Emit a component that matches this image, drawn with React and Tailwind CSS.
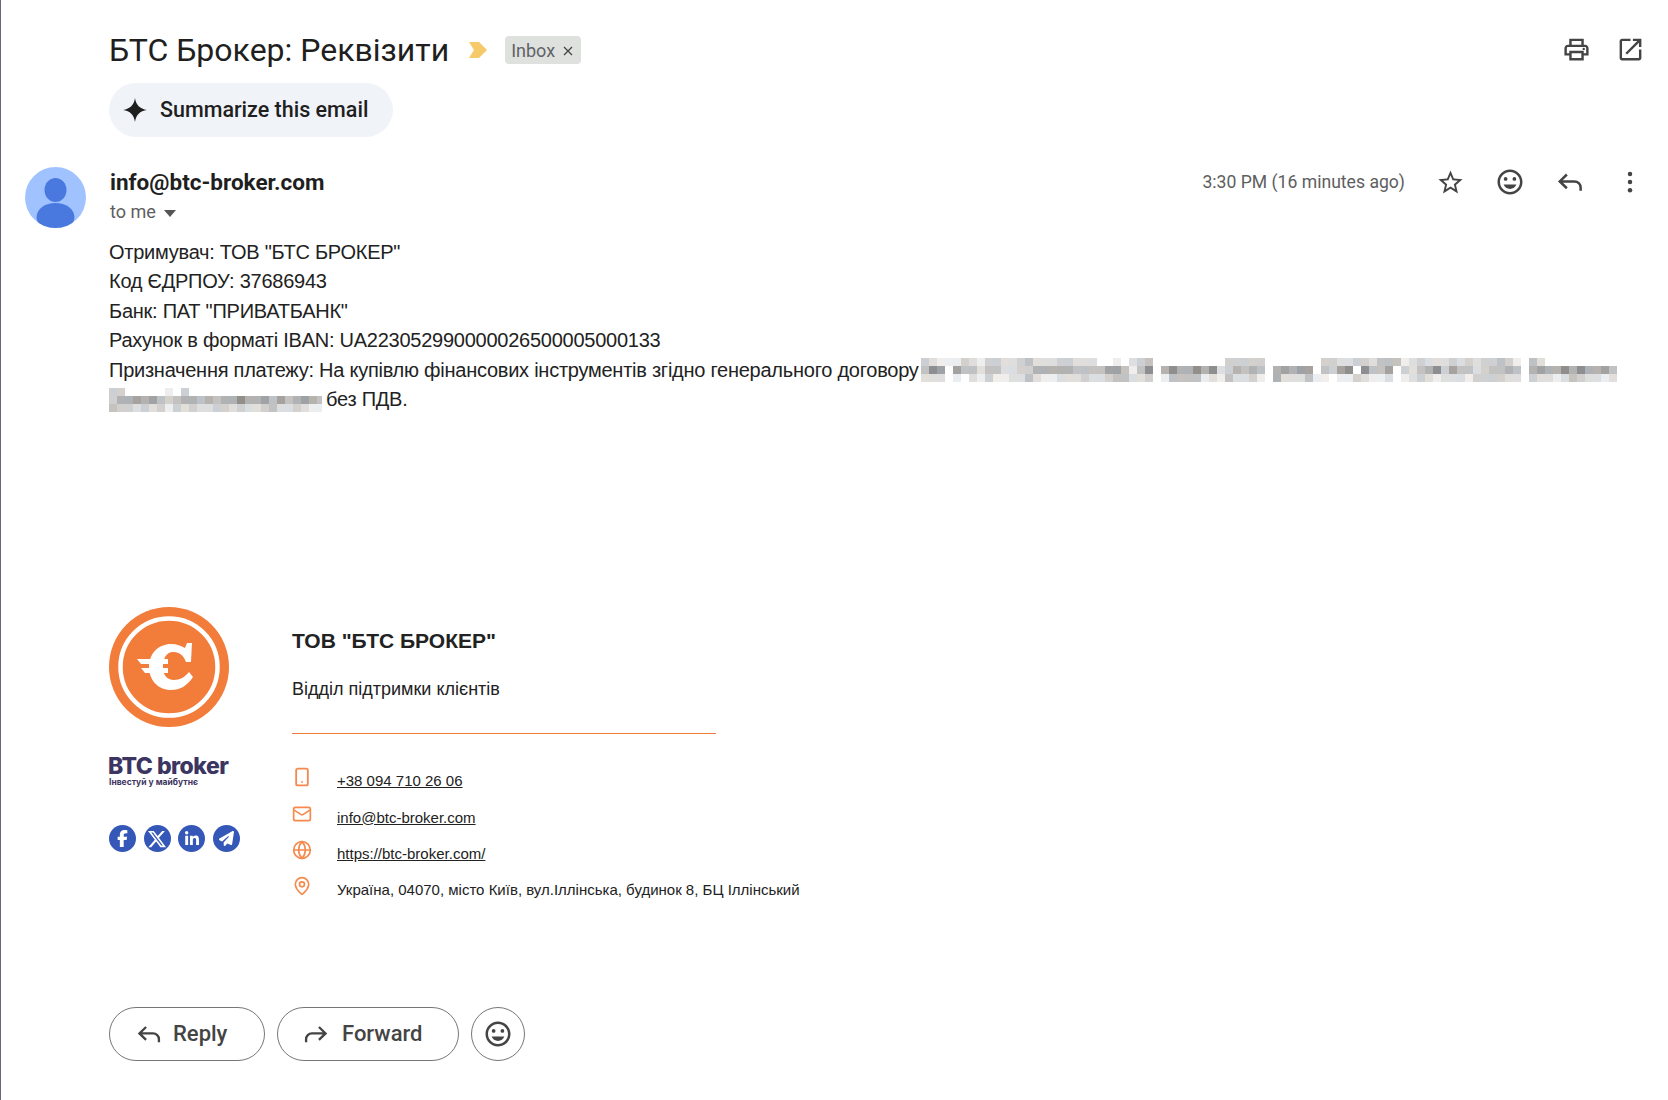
import { Smartphone, Mail, Globe, MapPin } from 'lucide-react'
import { FaFacebookF, FaXTwitter, FaLinkedinIn, FaPaperPlane } from 'react-icons/fa6'

const LEVELS = [255, 238, 222, 208, 194, 178, 162, 142]

// pixelated part of the body text, one digit per 8px cell
const LINE_ONE = [
  '3211132133' + '2234222332' + '2200102340' + '0000000033' + '3330000000' + '3322332444' + '1232223232' + '3343104200' + '0000000',
  '4760644244' + '2233555554' + '4446641470' + '5755757235' + '4540565660' + '4367074460' + '3245736442' + '3445405655' + '7575564',
  '2220102131' + '1224211222' + '3223442230' + '1444412142' + '2310522241' + '1011321120' + '1232122213' + '3332203221' + '2432212',
]
const LINE_TWO = [
  '330000010300000000000000000',
  '355656434554545575564645654',
  '433232313232233232234223211',
]

function Mosaic({ rows, cols, width }) {
  return (
    <svg width={width} height="24" viewBox={`0 0 ${width} 24`} className="shrink-0">
      {rows.map((row, y) =>
        row.slice(0, cols).split('').map((d, x) => {
          const v = LEVELS[Number(d)]
          const tint = d === '0' ? 0 : ((x * 7 + y * 13) % 9) - 4
          return <rect key={x + '-' + y} x={x * 8} y={y * 8} width="8" height="8" fill={`rgb(${v + tint},${v},${v - tint})`} />
        })
      )}
    </svg>
  )
}

const Star = () => (
  <svg width="29" height="29" viewBox="0 0 24 24" fill="currentColor"><path d="M22 9.240l-7.190-.62L12 2 9.190 8.630 2 9.240l5.460 4.730L5.820 21 12 17.270 18.180 21l-1.630-7.030L22 9.240zM12 15.400l-3.760 2.270 1-4.280-3.320-2.880 4.380-.38L12 6.100l1.710 4.040 4.380.38-3.320 2.880 1 4.280L12 15.400z" /></svg>
)

const Emoji = ({ size = 30 }) => (
  <svg width={size} height={size} viewBox="0 0 24 24" fill="currentColor">
    <path d="M11.990 2C6.470 2 2 6.480 2 12s4.470 10 9.990 10C17.520 22 22 17.520 22 12S17.520 2 11.990 2zM12 20c-4.420 0-8-3.580-8-8s3.580-8 8-8 8 3.580 8 8-3.580 8-8 8z" />
    <circle cx="15.500" cy="9.500" r="1.500" />
    <circle cx="8.500" cy="9.500" r="1.500" />
    <path d="M12 17.500c2.330 0 4.310-1.460 5.110-3.500H6.890c.8 2.040 2.780 3.500 5.110 3.500z" />
  </svg>
)

const ReplyIcon = ({ size = 30 }) => (
  <svg width={size} height={size} viewBox="0 0 24 24" fill="none" stroke="currentColor" strokeWidth="2"><path d="M9.500 6 3.800 11.500l5.700 5.500M4 11.500h11.500a5 5 0 0 1 5 5V19" /></svg>
)

const ForwardIcon = ({ size = 30 }) => (
  <svg width={size} height={size} viewBox="0 0 24 24" fill="none" stroke="currentColor" strokeWidth="2"><path d="M14.500 6l5.700 5.500-5.700 5.500M20 11.500H8.500a5 5 0 0 0-5 5V19" /></svg>
)

function App() {
  return (
    <div className="min-h-[1100px] w-[1668px] border-l border-[#6b6480] bg-white font-['Liberation_Sans',sans-serif] text-[#222]">
      {/* header */}
      <div className="flex items-start justify-between pl-[108px] pr-[23px] pt-[28px]">
        <div>
          <div className="flex h-[44px] items-center">
            <h1 className="font-['Roboto',sans-serif] text-[32px] font-normal leading-[44px] text-[#1f1f1f]">БТС Брокер: Реквізити</h1>
            <svg className="ml-[20px]" width="20" height="16" viewBox="0 0 20 16"><path d="M0 0h10l8 8-8 8H0l5-8z" fill="#f6c96b" /></svg>
            <span className="ml-[16px] flex h-[28px] w-[76px] items-center rounded-[4px] bg-[#dfe1df] pl-[6px] font-['Roboto',sans-serif] text-[18px] text-[#5f6368]">
              Inbox
              <svg className="ml-[8px] mt-[2px]" width="10" height="10" viewBox="0 0 10 10" stroke="#444" strokeWidth="1.300"><path d="M1 1l8 8M9 1l-8 8" /></svg>
            </span>
          </div>
          <button className="mt-[11px] flex h-[54px] w-[284px] items-center rounded-[27px] bg-[#f0f4f9] pl-[13px] font-['Roboto',sans-serif] text-[21.500px] font-medium text-[#1f1f1f]">
            <svg width="26" height="26" viewBox="0 0 24 24"><path d="M12 1c.9 6.400 4.600 10.100 11 11-6.400.9-10.100 4.600-11 11-.9-6.400-4.600-10.100-11-11 6.400-.9 10.100-4.600 11-11z" fill="#1f1f1f" /></svg>
            <span className="ml-[12px]">Summarize this email</span>
          </button>
        </div>
        <div className="flex items-center gap-[25px] pt-[7px] text-[#444]">
          <svg width="29" height="29" viewBox="0 0 24 24" fill="currentColor">
            <path d="M19 8h-1V3H6v5H5c-1.660 0-3 1.340-3 3v6h4v4h12v-4h4v-6c0-1.660-1.340-3-3-3zM8 5h8v3H8V5zm8 12v2H8v-4h8v2zm2-2v-2H6v2H4v-4c0-.55.45-1 1-1h14c.55 0 1 .45 1 1v4h-2z" />
            <circle cx="18" cy="11.500" r="1" />
          </svg>
          <svg width="29" height="29" viewBox="0 0 24 24" fill="currentColor"><path d="M19 19H5V5h7V3H5c-1.110 0-2 .9-2 2v14c0 1.100.89 2 2 2h14c1.100 0 2-.9 2-2v-7h-2v7zM14 3v2h3.590l-9.830 9.830 1.410 1.410L19 6.410V10h2V3h-7z" /></svg>
        </div>
      </div>

      {/* sender row */}
      <div className="mt-[30px] flex items-start pl-[24px] pr-[23px]">
        <svg width="61" height="61" viewBox="0 0 61 61">
          <defs><clipPath id="av"><circle cx="30.500" cy="30.500" r="30.500" /></clipPath></defs>
          <g clipPath="url(#av)">
            <rect width="61" height="61" fill="#a0c3ff" />
            <ellipse cx="30.500" cy="23" rx="11" ry="12" fill="#4979df" />
            <ellipse cx="30.500" cy="50" rx="19" ry="14" fill="#4979df" />
          </g>
        </svg>
        <div className="ml-[24px]">
          <div className="font-['Roboto',sans-serif] text-[22.500px] font-bold leading-[30px] text-[#1f1f1f]">info@btc-broker.com</div>
          <div className="mt-[2px] flex items-center font-['Roboto',sans-serif] text-[18px] leading-[26px] text-[#5e5e5e]">
            to me
            <svg className="ml-[8px] mt-[2px]" width="12" height="7" viewBox="0 0 12 7"><path d="M0 0h12L6 7z" fill="#555" /></svg>
          </div>
        </div>
        <div className="ml-auto flex h-[30px] items-center gap-[30px] text-[#444]">
          <span className="mr-[1px] font-['Roboto',sans-serif] text-[17.600px] text-[#5e5e5e]">3:30 PM (16 minutes ago)</span>
          <Star />
          <Emoji />
          <ReplyIcon />
          <svg width="30" height="30" viewBox="0 0 24 24" fill="currentColor">
            <circle cx="12" cy="5.500" r="1.800" /><circle cx="12" cy="12" r="1.800" /><circle cx="12" cy="18.500" r="1.800" />
          </svg>
        </div>
      </div>

      {/* body */}
      <div className="ml-[108px] mt-[10px] w-[1530px] text-[20px] leading-[29.400px] tracking-[-0.25px] text-[#222]">
        <div>Отримувач: ТОВ "БТС БРОКЕР"</div>
        <div>Код ЄДРПОУ: 37686943</div>
        <div>Банк: ПАТ "ПРИВАТБАНК"</div>
        <div>Рахунок в форматі IBAN: UA223052990000026500005000133</div>
        <div className="flex items-center">
          <span className="whitespace-nowrap">Призначення платежу: На купівлю фінансових інструментів згідно генерального договору</span>
          <span className="ml-[2px]"><Mosaic rows={LINE_ONE} cols={87} width={696} /></span>
        </div>
        <div className="flex items-center">
          <Mosaic rows={LINE_TWO} cols={27} width={213} />
          <span className="ml-[4px]">без ПДВ.</span>
        </div>
      </div>

      {/* signature */}
      <div className="ml-[108px] mt-[192px] flex items-start">
        <div className="w-[183px]">
          <svg className="-ml-px" width="122" height="122" viewBox="0 0 122 122">
            <circle cx="61" cy="61" r="60" fill="#f27c3a" />
            <circle cx="61" cy="61" r="48.500" fill="none" stroke="#fff" strokeWidth="4.500" />
            <path d="M84 37 83 56H78C75 48 70 46 65 46 58 46 55 53 55 61 55 69 59 74 66 74 72 74 77 71 81 66L85 71C79 80 72 84 63 84 50 84 41 74 41 61 41 47 51 38 63 38 69 38 73 40 77 42L79 37Z" fill="#fff" />
            <path d="M29 53H60V58H33ZM33 62H60V67H37Z" fill="#fff" />
          </svg>
          <div className="-ml-px mt-[27px] font-['Inter',sans-serif] text-[23px] font-extrabold leading-[22px] tracking-[-0.5px] text-[#3c3461]">BTC broker</div>
          <div className="font-['Inter',sans-serif] text-[8.500px] font-bold leading-[10px] text-[#3c3461]">Інвестуй у майбутнє</div>
          <div className="mt-[38px] flex gap-[7.600px]">
            <Social><FaFacebookF size={17} /></Social>
            <Social><FaXTwitter size={20} /></Social>
            <Social><FaLinkedinIn size={16} /></Social>
            <Social><FaPaperPlane size={15} /></Social>
          </div>
        </div>
        <div className="pt-[23px]">
          <div className="text-[21px] font-bold leading-[24px] text-[#222]">ТОВ "БТС БРОКЕР"</div>
          <div className="mt-[24px] text-[18px] leading-[24px] text-[#222]">Відділ підтримки клієнтів</div>
          <div className="mt-[32px] h-px w-[424px] bg-[#f27c3a]" />
          <div className="mt-[37px] flex flex-col gap-[16.100px] text-[15px] leading-[20px] text-[#222]">
            <Row icon={<Smartphone size={20} strokeWidth={2.200} />}><a className="underline">+38 094 710 26 06</a></Row>
            <Row icon={<Mail size={20} strokeWidth={2} />}><a className="underline">info@btc-broker.com</a></Row>
            <Row icon={<Globe size={20} strokeWidth={2} />}><a className="underline">https://btc-broker.com/</a></Row>
            <Row icon={<MapPin size={20} strokeWidth={2} />}>Україна, 04070, місто Київ, вул.Іллінська, будинок 8, БЦ Іллінський</Row>
          </div>
        </div>
      </div>

      {/* actions */}
      <div className="ml-[108px] mt-[107px] flex gap-[12px] font-['Roboto',sans-serif] text-[22px] font-medium text-[#444]">
        <button className="flex h-[54px] w-[156px] items-center rounded-[27px] border border-[#747775] pl-[25px]">
          <ReplyIcon size={28} /><span className="ml-[10px]">Reply</span>
        </button>
        <button className="flex h-[54px] w-[182px] items-center rounded-[27px] border border-[#747775] pl-[24px]">
          <ForwardIcon size={28} /><span className="ml-[12px]">Forward</span>
        </button>
        <button className="flex h-[54px] w-[54px] items-center justify-center rounded-full border border-[#747775]">
          <Emoji size={30} />
        </button>
      </div>
    </div>
  )
}

function Social({ children }) {
  return <div className="flex h-[27px] w-[27px] items-center justify-center rounded-full bg-[#3457b8] text-white">{children}</div>
}

function Row({ icon, children }) {
  return (
    <div className="flex items-center">
      <span className="-mt-[8px] flex w-[45px] text-[#f6894d]">{icon}</span>
      <span>{children}</span>
    </div>
  )
}

export default App
